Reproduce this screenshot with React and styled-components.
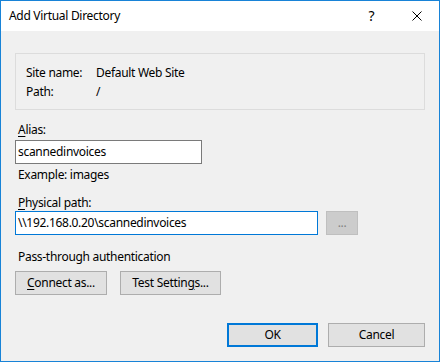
import React from "react";
import styled, { createGlobalStyle } from "styled-components";

const Global = createGlobalStyle`
  html, body { margin: 0; padding: 0; background: #ffffff; }
  * { box-sizing: border-box; }
`;

const Window = styled.div`
  width: 440px;
  height: 362px;
  border: 1px solid #1883d7;
  display: flex;
  flex-direction: column;
  font-family: "Noto Sans", "Segoe UI", sans-serif;
  font-size: 12px;
  letter-spacing: -0.3px;
  color: #000;
  background: #f0f0f0;
`;

const TitleBar = styled.div`
  height: 30px;
  flex: none;
  background: #fff;
  display: flex;
  align-items: center;
  padding-left: 8px;
`;

const Title = styled.div`
  flex: 1;
  line-height: 16px;
  padding-bottom: 1px;
`;

const TitleButton = styled.div`
  width: 45px;
  height: 30px;
  display: flex;
  align-items: center;
  justify-content: center;
  font-size: 14px;
  padding-bottom: 1px;
`;

const Body = styled.div`
  flex: 1;
  display: flex;
  flex-direction: column;
  padding: 22px 14px 0 14px;
`;

const InfoBox = styled.div`
  border: 1px solid #dcdcdc;
  height: 57px;
  padding: 9px 10px 0 10px;
  display: grid;
  grid-template-columns: 70px 1fr;
  grid-auto-rows: 19px;
  align-items: center;
`;

const Label = styled.div`
  line-height: 16px;
  padding-left: 3px;
  margin-top: ${(p) => p.$mt || 0}px;
`;

const Mn = styled.span`
  text-decoration: underline;
  text-underline-offset: 2px;
`;

const Row = styled.div`
  display: flex;
  gap: ${(p) => p.$gap || 0}px;
  margin-top: ${(p) => p.$mt || 0}px;
  align-items: flex-start;
`;

const Input = styled.div`
  width: ${(p) => p.$w}px;
  height: 24px;
  border: 1px solid ${(p) => (p.$focus ? "#0078d7" : "#7a7a7a")};
  background: #fff;
  padding-left: 2px;
  display: flex;
  align-items: center;
  white-space: nowrap;
  padding-bottom: 1px;
`;

const Button = styled.div`
  width: ${(p) => p.$w}px;
  height: 24px;
  background: ${(p) => (p.$disabled ? "#cccccc" : "#e1e1e1")};
  border: ${(p) =>
    p.$default
      ? "2px solid #0078d7"
      : p.$disabled
      ? "1px solid #bfbfbf"
      : "1px solid #adadad"};
  color: ${(p) => (p.$disabled ? "#838383" : "#000")};
  display: flex;
  align-items: center;
  justify-content: center;
  padding-bottom: 1px;
  white-space: nowrap;
`;

const Footer = styled.div`
  display: flex;
  justify-content: flex-end;
  gap: 10px;
  margin-top: 28px;
`;

export default function App() {
  return (
    <>
      <Global />
      <Window>
        <TitleBar>
          <Title>Add Virtual Directory</Title>
          <TitleButton>?</TitleButton>
          <TitleButton>
            <svg width="10" height="10" viewBox="0 0 10 10">
              <path d="M0.5 0.5 L9.5 9.5 M9.5 0.5 L0.5 9.5" stroke="#000" strokeWidth="1" fill="none" />
            </svg>
          </TitleButton>
        </TitleBar>
        <Body>
          <InfoBox>
            <div>Site name:</div>
            <div>Default Web Site</div>
            <div>Path:</div>
            <div>/</div>
          </InfoBox>
          <Label $mt={12}>
            <Mn>A</Mn>lias:
          </Label>
          <Row $mt={2}>
            <Input $w={187}>scannedinvoices</Input>
          </Row>
          <Label $mt={3}>Example: images</Label>
          <Label $mt={12}>
            <Mn>P</Mn>hysical path:
          </Label>
          <Row $mt={0} $gap={8}>
            <Input $w={303} $focus>\\192.168.0.20\scannedinvoices</Input>
            <Button $w={32} $disabled>...</Button>
          </Row>
          <Label $mt={14}>Pass-through authentication</Label>
          <Row $mt={6} $gap={13}>
            <Button $w={92}>
              <span>
                <Mn>C</Mn>onnect as...
              </span>
            </Button>
            <Button $w={101}>
              <span>
                Test Settin<Mn>g</Mn>s...
              </span>
            </Button>
          </Row>
          <Footer>
            <Button $w={91} $default>OK</Button>
            <Button $w={97}>Cancel</Button>
          </Footer>
        </Body>
      </Window>
    </>
  );
}
